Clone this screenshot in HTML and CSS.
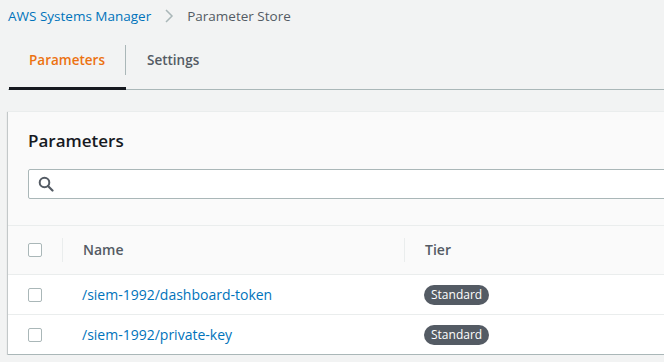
FILE: index.html
```html
<!DOCTYPE html>
<html lang="en">
<head>
    <meta charset="UTF-8">
    <title>Parameter Store</title>
    <link rel="stylesheet" href="styles.css">
</head>
<body>
    <div class="page">
        <nav class="breadcrumbs">
            <a href="#">AWS Systems Manager</a>
            <svg class="crumb-sep" width="10" height="14" viewBox="0 0 10 14"><path d="M2 1l6 6-6 6" fill="none" stroke="#aab7b8" stroke-width="1.5"/></svg>
            <span>Parameter Store</span>
        </nav>

        <div class="tabs">
            <div class="tab active">Parameters</div>
            <div class="tab">Settings</div>
        </div>

        <div class="card">
            <div class="card-header">
                <h2>Parameters</h2>
                <div class="search">
                    <svg width="16" height="16" viewBox="0 0 16 16"><circle cx="6.5" cy="6.5" r="4.8" fill="none" stroke="#545b64" stroke-width="2"/><path d="M10 10l4.5 4.5" stroke="#545b64" stroke-width="2.2" stroke-linecap="round"/></svg>
                </div>
            </div>
            <table class="params">
                <thead>
                    <tr>
                        <th class="col-check"><span class="checkbox"></span></th>
                        <th class="col-name"><span class="th-inner">Name</span></th>
                        <th class="col-tier"><span class="th-inner">Tier</span></th>
                    </tr>
                </thead>
                <tbody>
                    <tr>
                        <td class="col-check"><span class="checkbox"></span></td>
                        <td class="col-name"><a href="#">/siem-1992/dashboard-token</a></td>
                        <td class="col-tier"><span class="badge">Standard</span></td>
                    </tr>
                    <tr>
                        <td class="col-check"><span class="checkbox"></span></td>
                        <td class="col-name"><a href="#">/siem-1992/private-key</a></td>
                        <td class="col-tier"><span class="badge">Standard</span></td>
                    </tr>
                </tbody>
            </table>
        </div>
    </div>
</body>
</html>
```

FILE: styles.css
```css
body {
    margin: 0;
    background: #f2f3f3;
    font-family: "Open Sans", "Noto Sans", Arial, sans-serif;
    font-size: 14px;
    color: #16191f;
    overflow: hidden;
}

.page {
    width: 740px;
    padding: 0 8px;
}

.breadcrumbs {
    display: flex;
    align-items: center;
    height: 31px;
    font-size: 13.5px;
    color: #545b64;
}

.breadcrumbs a {
    color: #0073bb;
    text-decoration: none;
}

.crumb-sep {
    margin: 0 13px 0 13px;
}

.tabs {
    display: flex;
    align-items: center;
    height: 58px;
    border-bottom: 1px solid #aab7b8;
}

.tab {
    position: relative;
    display: flex;
    align-items: center;
    height: 30px;
    padding: 0 21px;
    font-size: 13.5px;
    font-weight: 600;
    color: #545b64;
}

.tab.active {
    color: #ec7211;
    border-right: 1px solid #aab7b8;
    padding-right: 20px;
}

.tab.active::after {
    content: "";
    position: absolute;
    left: 1px;
    right: -1px;
    bottom: -15px;
    height: 3px;
    background: #16191f;
}

.card {
    margin-top: 21px;
    background: #fff;
    box-shadow: 0 1px 1px 0 rgba(0,28,36,0.3), 1px 1px 1px 0 rgba(0,28,36,0.15), -1px 1px 1px 0 rgba(0,28,36,0.15);
    border-top: 1px solid #eaeded;
}

.card-header {
    background: #fafafa;
    padding: 15px 20px 26px;
    border-bottom: 1px solid #eaeded;
}

.card-header h2 {
    margin: 0 0 14px;
    font-size: 17px;
    line-height: 28px;
    font-weight: 600;
}

.search {
    display: flex;
    align-items: center;
    height: 28px;
    background: #fff;
    border: 1px solid #aab7b8;
    border-radius: 2px;
    padding-left: 9px;
}

.params {
    width: 100%;
    border-collapse: collapse;
    table-layout: fixed;
}

.params th {
    background: #fafafa;
    height: 48px;
    text-align: left;
    font-weight: 600;
    color: #545b64;
    padding: 0;
}

.params td {
    height: 39px;
    padding: 0;
    border-top: 1px solid #eaeded;
}

.params tbody tr:last-child td {
    border-bottom: 1px solid #aab7b8;
}

.params .col-check {
    width: 34px;
    padding-left: 20px;
}

.params .col-name {
    width: 342px;
}

.th-inner {
    display: block;
    border-left: 1px solid #eaeded;
    padding-left: 20px;
    line-height: 24px;
}

.params a {
    display: block;
    margin-left: 20px;
    color: #0073bb;
    text-decoration: none;
}

.checkbox {
    display: block;
    width: 12px;
    height: 12px;
    border: 1px solid #aab7b8;
    border-radius: 2px;
    background: #fff;
}

.badge {
    display: inline-block;
    margin-left: 20px;
    background: #545b64;
    color: #fff;
    font-size: 12px;
    line-height: 20px;
    padding: 0 7px;
    border-radius: 10px;
}
```
